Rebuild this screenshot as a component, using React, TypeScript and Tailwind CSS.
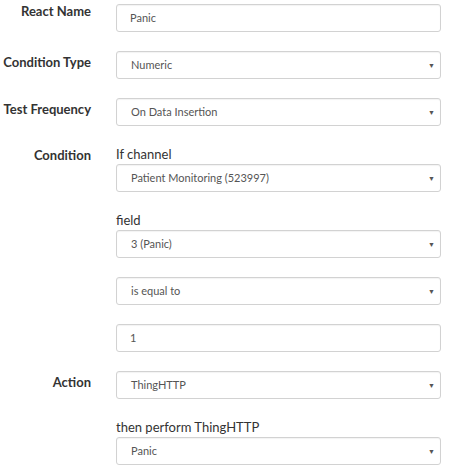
import React from 'react';

const font = { fontFamily: 'Lato, "Open Sans", sans-serif' };

function Field({ value, select = false }: { value: string; select?: boolean }) {
    return (
        <div className="flex h-[28px] w-[325px] items-center justify-between rounded-[3px] border border-[#d2d2d2] bg-white pl-[13px] pr-[5px] shadow-[inset_0_1px_1px_rgba(0,0,0,0.05)]">
            <span className={select ? 'pl-[1px] text-[11px] text-[#555]' : 'text-[11px] text-[#555]'}>{value}</span>
            {select && <span className="text-[7px] leading-none text-[#555]">▼</span>}
        </div>
    );
}

function Row({ label, labelClass = 'pt-[1px]', children }: { label?: string; labelClass?: string; children: React.ReactNode }) {
    return (
        <div className="flex">
            <div className={`flex w-[91px] shrink-0 justify-end whitespace-nowrap text-[13px] font-bold leading-[20px] text-[#333] ${labelClass}`}>
                {label}
            </div>
            <div className="ml-[25px] flex flex-col">{children}</div>
        </div>
    );
}

function Sub({ children }: { children: React.ReactNode }) {
    return <div className="mb-[1px] text-[13px] leading-[18px] text-[#333]">{children}</div>;
}

export default function App() {
    return (
        <div className="flex h-[469px] w-[450px] flex-col gap-[19px] overflow-hidden bg-white pt-[4px]" style={font}>
            <Row label="React Name" labelClass="-mt-[3px]">
                <Field value="Panic" />
            </Row>
            <Row label="Condition Type">
                <Field value="Numeric" select />
            </Row>
            <Row label="Test Frequency">
                <Field value="On Data Insertion" select />
            </Row>
            <Row label="Condition" labelClass="pt-0">
                <Sub>If channel</Sub>
                <Field value="Patient Monitoring (523997)" select />
                <div className="h-[19px]" />
                <Sub>field</Sub>
                <Field value="3 (Panic)" select />
                <div className="h-[19px]" />
                <Field value="is equal to" select />
                <div className="h-[19px]" />
                <Field value="1" />
            </Row>
            <Row label="Action" labelClass="pt-[1px]">
                <Field value="ThingHTTP" select />
                <div className="h-[19px]" />
                <Sub>then perform ThingHTTP</Sub>
                <Field value="Panic" select />
            </Row>
        </div>
    );
}
